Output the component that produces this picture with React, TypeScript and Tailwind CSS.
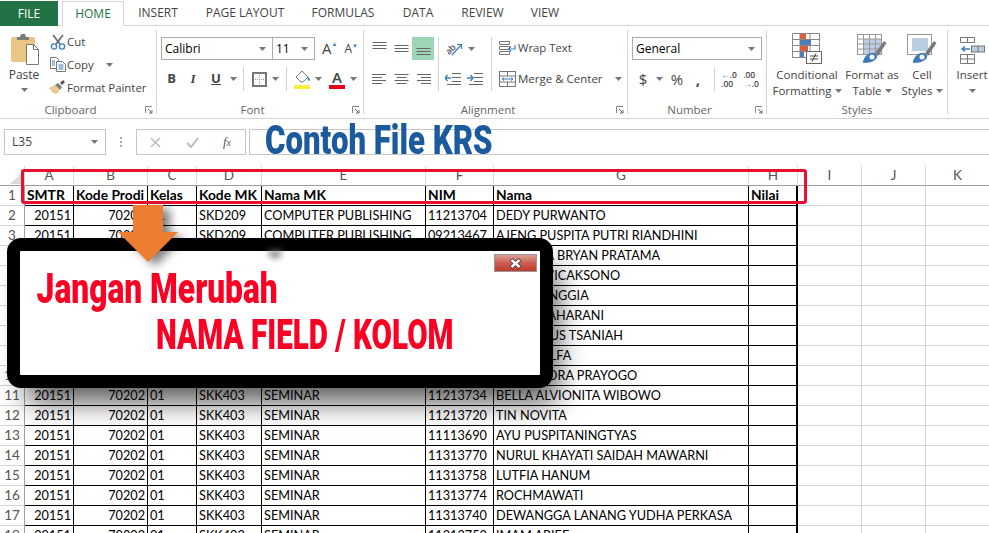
import type { ReactNode } from "react";

// ─── Data ────────────────────────────────────────────────────────────────────

const tabs = [
  { label: "HOME", w: "w-[62px]" },
  { label: "INSERT", w: "w-[68px]" },
  { label: "PAGE LAYOUT", w: "w-[106px]" },
  { label: "FORMULAS", w: "w-[90px]" },
  { label: "DATA", w: "w-[60px]" },
  { label: "REVIEW", w: "w-[69px]" },
  { label: "VIEW", w: "w-[56px]" },
];

const columns = ["A", "B", "C", "D", "E", "F", "G", "H", "I", "J", "K"];
const gridCols =
  "grid grid-cols-[25px_49px_74px_49px_65px_164px_68px_255px_49px_64px_64px_64px]";

const krs = "SKK403";
const rows = [
  ["SKD209", "COMPUTER PUBLISHING", "11213704", "DEDY PURWANTO"],
  ["SKD209", "COMPUTER PUBLISHING", "09213467", "AJENG PUSPITA PUTRI RIANDHINI"],
  [krs, "SEMINAR", "11213700", "ANDHIKA BRYAN PRATAMA"],
  [krs, "SEMINAR", "11213701", "BAGUS WICAKSONO"],
  [krs, "SEMINAR", "11213702", "RATNA ANGGIA"],
  [krs, "SEMINAR", "11213703", "RATIH MAHARANI"],
  [krs, "SEMINAR", "11213705", "IIS FIRDAUS TSANIAH"],
  [krs, "SEMINAR", "11213706", "NURUL ALFA"],
  [krs, "SEMINAR", "11213707", "ADI CANDRA PRAYOGO"],
  [krs, "SEMINAR", "11213734", "BELLA ALVIONITA WIBOWO"],
  [krs, "SEMINAR", "11213720", "TIN NOVITA"],
  [krs, "SEMINAR", "11113690", "AYU PUSPITANINGTYAS"],
  [krs, "SEMINAR", "11313770", "NURUL KHAYATI SAIDAH MAWARNI"],
  [krs, "SEMINAR", "11313758", "LUTFIA HANUM"],
  [krs, "SEMINAR", "11313774", "ROCHMAWATI"],
  [krs, "SEMINAR", "11313740", "DEWANGGA LANANG YUDHA PERKASA"],
  [krs, "SEMINAR", "11313752", "IMAM ARIEF"],
];

// ─── Small icons ─────────────────────────────────────────────────────────────

function Caret() {
  return (
    <svg width="7" height="4" viewBox="0 0 7 4" className="shrink-0">
      <path d="M0 0h7L3.5 4z" fill="#777" />
    </svg>
  );
}

function Launcher() {
  return (
    <svg width="8" height="8" viewBox="0 0 8 8">
      <path d="M0.5 7V0.5H7" fill="none" stroke="#888" />
      <path d="M3 3l4 4M7 4v3H4" fill="none" stroke="#666" />
    </svg>
  );
}

function PasteIcon() {
  return (
    <svg width="30" height="34" viewBox="0 0 30 34">
      <rect x="0" y="5" width="24" height="25" rx="2" fill="#e9c684" />
      <path d="M6 5h3l1-3h4l1 3h3v3H6z" fill="#7a7a7a" />
      <path d="M15.5 12.5h7l5 5v15h-12z" fill="#fff" stroke="#777" />
      <path d="M22.5 12.5v5h5" fill="none" stroke="#777" />
    </svg>
  );
}

function CutIcon() {
  return (
    <svg width="16" height="16" viewBox="0 0 16 16">
      <path d="M3 1l7 9M13 1L6 10" stroke="#666" strokeWidth="1.6" fill="none" />
      <circle cx="4" cy="12.5" r="2.6" fill="none" stroke="#3f7fbf" strokeWidth="1.4" />
      <circle cx="12" cy="12.5" r="2.6" fill="none" stroke="#3f7fbf" strokeWidth="1.4" />
    </svg>
  );
}

function CopyIcon() {
  return (
    <svg width="16" height="15" viewBox="0 0 16 15">
      <path d="M0.5 0.5h6l2 2v9h-8z" fill="#fff" stroke="#777" />
      <path d="M6.5 4.5h6l3 3v7h-9z" fill="#fff" stroke="#777" />
      <path d="M2 4h3M2 6h3M2 8h3M8.5 8h5M8.5 10h5M8.5 12h5" stroke="#3f7fbf" />
    </svg>
  );
}

function PainterIcon() {
  return (
    <svg width="17" height="15" viewBox="0 0 17 15">
      <path d="M0 8l6-3 5 6-4 3c-2 0-5-3-7-6z" fill="#eec98c" />
      <path d="M6 5l3-2 4 4-2 3z" fill="#7d7d7d" />
      <path d="M11 3l3-3 2 2-3 3z" fill="#555" />
    </svg>
  );
}

function Lines({ ys, widths, anchor }: { ys: number[]; widths: number[]; anchor: "l" | "c" | "r" }) {
  return (
    <svg width="15" height="15" viewBox="0 0 15 15">
      {ys.map((y, i) => {
        const w = widths[i % widths.length];
        const x = anchor === "l" ? 0 : anchor === "c" ? (15 - w) / 2 : 15 - w;
        return <path key={y} d={`M${x} ${y + 0.5}h${w}`} stroke="#666" />;
      })}
    </svg>
  );
}

function BorderIcon() {
  return (
    <svg width="15" height="15" viewBox="0 0 15 15">
      <rect x="1" y="1" width="13" height="13" fill="#fff" stroke="#777" strokeWidth="2" />
      <path d="M7.5 3v9M3 7.5h9" stroke="#999" strokeDasharray="1 1" />
    </svg>
  );
}

function FillIcon() {
  return (
    <svg width="17" height="20" viewBox="0 0 17 20">
      <path d="M2 8l6-6 6 6-5 5H7z" fill="#fff" stroke="#777" />
      <path d="M13 7c2 1 3 3 3 4s-2 1-2 0z" fill="#3f7fbf" />
      <rect x="0" y="16" width="16" height="4" fill="#ffeb3b" />
    </svg>
  );
}

function WrapIcon() {
  return (
    <svg width="17" height="15" viewBox="0 0 17 15">
      <path d="M0.5 0.5h10v3h-10zM0.5 5.5h10v3h-10zM0.5 10.5h10v3h-10z" fill="#fff" stroke="#777" />
      <path d="M16 4v4h-6" fill="none" stroke="#3f7fbf" strokeWidth="1.2" />
      <path d="M12 5.5L9.5 8l2.5 2.5" fill="none" stroke="#3f7fbf" strokeWidth="1.2" />
    </svg>
  );
}

function MergeIcon() {
  return (
    <svg width="17" height="16" viewBox="0 0 17 16">
      <rect x="0.5" y="0.5" width="16" height="15" fill="#fff" stroke="#777" />
      <path d="M0.5 5h16M0.5 11h16M8.5 0.5V5M8.5 11v4.5" stroke="#777" />
      <path d="M3 8h11M5 6.5L3 8l2 1.500M12 6.500L14 8l-2 1.500" fill="none" stroke="#3f7fbf" />
    </svg>
  );
}

function OrientIcon() {
  return (
    <svg width="19" height="17" viewBox="0 0 19 17">
      <text x="0" y="12" fontSize="9" fill="#555" fontWeight="600" transform="rotate(-45 6 9)">
        ab
      </text>
      <path d="M7 15L16 5M12 4.500h4.500v4.500" stroke="#3f7fbf" fill="none" strokeWidth="1.200" />
    </svg>
  );
}

function IndentIcon({ flip }: { flip?: boolean }) {
  return (
    <svg width="16" height="12" viewBox="0 0 16 12">
      <path d="M7 0.500h9M7 4.500h9M7 8.500h9M2 11.500h14" stroke="#666" />
      <path
        d={flip ? "M0 5h6M3.500 2L6 5 3.500 8" : "M6 5H0M2.500 2L0 5l2.500 3"}
        stroke="#3f7fbf"
        strokeWidth="1.4"
        fill="none"
      />
    </svg>
  );
}

function CondIcon() {
  return (
    <svg width="30" height="31" viewBox="0 0 30 31">
      <path d="M0.5 0.500h27v24h-27zM0.500 6.500h27M0.500 12.500h27M0.500 18.500h27M8 0.500v24M18 0.500v24" fill="#fff" stroke="#888" />
      <rect x="8" y="1" width="6" height="5" fill="#dd5e3c" />
      <rect x="8" y="7" width="11" height="5" fill="#4a7fb8" />
      <rect x="8" y="13" width="8" height="5" fill="#dd5e3c" />
      <rect x="8" y="19" width="4" height="5" fill="#4a7fb8" />
      <rect x="14.500" y="18.500" width="15" height="12" fill="#fff" stroke="#666" />
      <path d="M18 23h8M18 26h8M24 20.500l-4 8" stroke="#444" fill="none" />
    </svg>
  );
}

function TableIcon({ plain }: { plain?: boolean }) {
  return (
    <svg width="30" height="31" viewBox="0 0 30 31">
      <rect x="0.500" y="1.500" width="24" height="20" fill="#fff" stroke="#999" />
      {plain ? (
        <rect x="5" y="5" width="16" height="13" fill="#b9cde3" />
      ) : (
        <>
          <rect x="6" y="6" width="18" height="15" fill="#bccfe4" />
          <path d="M0.500 6h24M0.500 11h24M0.500 16h24M6.500 1.500v20M12.500 1.500v20M18.500 1.500v20" stroke="#999" />
        </>
      )}
      <path d="M18 20L27 8l2.500 2L21 23z" fill="#7a7a7a" />
      <path d="M6 30c0-6 6-11 11-10 3 1 4 4 2 6-3 3-8 4-13 4z" fill="#3d79b8" />
      <circle cx="15" cy="24" r="2.500" fill="#fff" />
    </svg>
  );
}

function InsertIcon() {
  return (
    <svg width="25" height="27" viewBox="0 0 25 27">
      <path d="M0.500 0.500h14v5h-14zM7.500 0.500v5M0.500 17.500h14v9h-14zM7.500 17.500v9M0.500 22h14" fill="#fff" stroke="#777" />
      <rect x="11.500" y="9" width="13" height="6" fill="#b9cde3" stroke="#777" />
      <path d="M18 9v6" stroke="#777" />
      <path d="M10 12H2M5 9.500L2 12l3 2.500" fill="none" stroke="#3f7fbf" strokeWidth="1.500" />
    </svg>
  );
}

function CloseGlyph() {
  return (
    <svg width="15" height="11" viewBox="0 0 15 11">
      <path d="M3 1.500L12 9.500M12 1.500L3 9.500" stroke="#3a3a3a" strokeWidth="4" fill="none" />
      <path d="M3.500 2L11.500 9M11.500 2L3.500 9" stroke="#fff" strokeWidth="2.400" fill="none" />
    </svg>
  );
}

// ─── Ribbon pieces ───────────────────────────────────────────────────────────

function Sep() {
  return <div className="my-1 w-px shrink-0 bg-[#d4d4d4]" />;
}

function Group({
  label,
  launcher,
  className,
  children,
}: {
  label: string;
  launcher?: boolean;
  className: string;
  children: ReactNode;
}) {
  return (
    <div className={`flex shrink-0 flex-col ${className}`}>
      <div className="h-[75px]">{children}</div>
      <div className="flex h-[17px] items-center">
        <span className="flex-1 text-center text-[11.5px] text-[#666]">{label}</span>
        {launcher && (
          <span className="flex w-[15px] justify-center">
            <Launcher />
          </span>
        )}
      </div>
    </div>
  );
}

function Slot({ w, children }: { w: string; children?: ReactNode }) {
  return <div className={`flex h-full shrink-0 items-center justify-center ${w}`}>{children}</div>;
}

function Big({ w, icon, lines }: { w: string; icon: ReactNode; lines: string[] }) {
  return (
    <div className={`flex shrink-0 flex-col items-center ${w}`}>
      <div className="flex h-[38px] items-end">{icon}</div>
      <div className="mt-[3px] text-center text-[11.5px] leading-[16px] whitespace-nowrap">
        {lines[0]}
      </div>
      <div className="flex items-center gap-[3px] text-[11.5px] leading-[16px] whitespace-nowrap">
        {lines[1]}
        <Caret />
      </div>
    </div>
  );
}

function Clip({ icon, label, caret }: { icon: ReactNode; label: string; caret?: boolean }) {
  return (
    <div className="flex h-[23px] items-center">
      <span className="flex w-[19px] justify-center">{icon}</span>
      <span className="text-[11.4px] whitespace-nowrap">{label}</span>
      {caret && (
        <span className="ml-[12px]">
          <Caret />
        </span>
      )}
    </div>
  );
}

function Ribbon() {
  return (
    <div className="flex h-[93px] border-b border-[#d4d4d4] text-[#444]">
      <Group label="Clipboard" launcher className="w-[156px]">
        <div className="flex">
          <div className="flex w-[48px] flex-col items-center pt-[6px]">
            <span className="ml-[4px] flex">
              <PasteIcon />
            </span>
            <span className="mt-[1px] text-[12px] leading-[16px]">Paste</span>
            <span className="mt-[5px] flex">
              <Caret />
            </span>
          </div>
          <div className="pt-[4px]">
            <Clip icon={<CutIcon />} label="Cut" />
            <Clip icon={<CopyIcon />} label="Copy" caret />
            <Clip icon={<PainterIcon />} label="Format Painter" />
          </div>
        </div>
      </Group>
      <Sep />
      <Group label="Font" launcher className="w-[206px]">
        <div className="pl-[4px] pt-[11px]">
          <div className="flex h-[23px] items-center">
            <div className="flex h-full w-[112px] items-center justify-between border border-[#ababab] pl-[3px] pr-[6px] text-[12px] text-black">
              Calibri
              <Caret />
            </div>
            <div className="-ml-px flex h-full w-[43px] items-center justify-between border border-[#ababab] pl-[3px] pr-[6px] text-[12px] text-black">
              11
              <Caret />
            </div>
            <span className="ml-[7px] flex items-start text-[15px] leading-none">
              A<span className="text-[6px] text-[#3f7fbf]">▲</span>
            </span>
            <span className="ml-[7px] flex items-start text-[12px] leading-none">
              A<span className="text-[6px] text-[#3f7fbf]">▼</span>
            </span>
          </div>
          <div className="mt-[7px] flex h-[24px] items-center text-[13px]">
            <Slot w="w-[21px]">
              <span className="font-bold">B</span>
            </Slot>
            <Slot w="w-[22px]">
              <span className="font-['Liberation_Serif',serif] italic font-bold">I</span>
            </Slot>
            <Slot w="w-[24px]">
              <span className="underline font-bold">U</span>
            </Slot>
            <Slot w="w-[10px]">
              <Caret />
            </Slot>
            <Slot w="w-[10px]">
              <div className="h-full w-px bg-[#d4d4d4]" />
            </Slot>
            <Slot w="w-[22px]">
              <BorderIcon />
            </Slot>
            <Slot w="w-[10px]">
              <Caret />
            </Slot>
            <Slot w="w-[12px]">
              <div className="h-full w-px bg-[#d4d4d4]" />
            </Slot>
            <Slot w="w-[20px]">
              <FillIcon />
            </Slot>
            <Slot w="w-[12px]">
              <Caret />
            </Slot>
            <Slot w="w-[26px]">
              <span className="flex flex-col items-center text-[15px] font-semibold leading-[16px]">
                A<span className="h-[4px] w-[16px] bg-[#e8001c]" />
              </span>
            </Slot>
            <Slot w="w-[6px]">
              <Caret />
            </Slot>
          </div>
        </div>
      </Group>
      <Sep />
      <Group label="Alignment" launcher className="w-[263px]">
        <div className="flex pt-[11px]">
          <div className="w-[74px] pl-[4px]">
            <div className="flex h-[23px]">
              <Slot w="w-[22px]">
                <Lines ys={[1, 4, 7]} widths={[14]} anchor="c" />
              </Slot>
              <Slot w="w-[22px]">
                <Lines ys={[4, 7, 10]} widths={[14]} anchor="c" />
              </Slot>
              <Slot w="w-[22px] bg-[#9fd5b7]">
                <Lines ys={[7, 10, 13]} widths={[14]} anchor="c" />
              </Slot>
            </div>
            <div className="mt-[7px] flex h-[24px]">
              <Slot w="w-[22px]">
                <Lines ys={[2, 5, 8, 11]} widths={[14, 10]} anchor="l" />
              </Slot>
              <Slot w="w-[22px]">
                <Lines ys={[2, 5, 8, 11]} widths={[14, 10]} anchor="c" />
              </Slot>
              <Slot w="w-[22px]">
                <Lines ys={[2, 5, 8, 11]} widths={[14, 10]} anchor="r" />
              </Slot>
            </div>
          </div>
          <div className="h-[54px] w-px bg-[#d4d4d4]" />
          <div className="w-[52px]">
            <div className="flex h-[23px] items-center pl-[6px]">
              <OrientIcon />
              <span className="ml-[4px]">
                <Caret />
              </span>
            </div>
            <div className="mt-[7px] flex h-[24px] items-center gap-[6px] pl-[6px]">
              <IndentIcon />
              <IndentIcon flip />
            </div>
          </div>
          <div className="h-[54px] w-px bg-[#d4d4d4]" />
          <div className="pl-[7px]">
            <div className="flex h-[23px] items-center gap-[2px] text-[11.3px] whitespace-nowrap">
              <WrapIcon />
              Wrap Text
            </div>
            <div className="mt-[7px] flex h-[24px] items-center gap-[2px] text-[11.5px] whitespace-nowrap">
              <MergeIcon />
              Merge &amp; Center
              <span className="ml-[10px]">
                <Caret />
              </span>
            </div>
          </div>
        </div>
      </Group>
      <Sep />
      <Group label="Number" launcher className="w-[138px]">
        <div className="pl-[4px] pt-[11px]">
          <div className="flex h-[23px] w-[130px] items-center justify-between border border-[#ababab] pl-[3px] pr-[6px] text-[12px] text-black">
            General
            <Caret />
          </div>
          <div className="mt-[7px] flex h-[24px] items-center">
            <Slot w="w-[22px]">
              <span className="text-[15px]">$</span>
            </Slot>
            <Slot w="w-[10px]">
              <Caret />
            </Slot>
            <Slot w="w-[26px]">
              <span className="text-[15px]">%</span>
            </Slot>
            <Slot w="w-[16px]">
              <span className="text-[15px] font-bold leading-none">,</span>
            </Slot>
            <Slot w="w-[16px]">
              <div className="h-full w-px bg-[#d4d4d4]" />
            </Slot>
            <Slot w="w-[14px]">
              <span className="text-[8.5px] leading-[9px] font-semibold whitespace-nowrap">
                <span className="text-[#3f7fbf]">←</span>.0
                <br />
                .00
              </span>
            </Slot>
            <Slot w="w-[30px]">
              <span className="text-[8.5px] leading-[9px] font-semibold whitespace-nowrap">
                .00
                <br />
                <span className="text-[#3f7fbf]">→</span>.0
              </span>
            </Slot>
          </div>
        </div>
      </Group>
      <Sep />
      <Group label="Styles" className="w-[180px]">
        <div className="flex pl-[2px]">
          <Big w="w-[76px]" icon={<CondIcon />} lines={["Conditional", "Formatting"]} />
          <Big w="w-[54px]" icon={<TableIcon />} lines={["Format as", "Table"]} />
          <Big w="w-[46px]" icon={<TableIcon plain />} lines={["Cell", "Styles"]} />
        </div>
      </Group>
      <Sep />
      <Group label="" className="w-[48px]">
        <div className="flex flex-col items-center">
          <div className="flex h-[38px] items-end">
            <InsertIcon />
          </div>
          <span className="mt-[3px] text-[11.5px] leading-[16px]">Insert</span>
          <span className="mt-[6px]">
            <Caret />
          </span>
        </div>
      </Group>
    </div>
  );
}

// ─── Formula bar ─────────────────────────────────────────────────────────────

function FormulaBar() {
  return (
    <div className="flex h-[47px] items-start pt-[10px] text-[#444]">
      <div className="ml-[4px] flex h-[26px] w-[102px] items-center justify-between border border-[#c6c6c6] pl-[7px] pr-[7px] text-[12px]">
        L35
        <Caret />
      </div>
      <div className="flex h-[26px] w-[30px] flex-col items-center justify-center gap-[2px]">
        <span className="size-[2px] bg-[#aaa]" />
        <span className="size-[2px] bg-[#aaa]" />
        <span className="size-[2px] bg-[#aaa]" />
      </div>
      <div className="flex h-[26px] w-[110px] items-center border border-[#c6c6c6]">
        <Slot w="w-[37px]">
          <svg width="11" height="11" viewBox="0 0 11 11">
            <path d="M1 1l9 9M10 1l-9 9" stroke="#bbb" strokeWidth="1.500" />
          </svg>
        </Slot>
        <Slot w="w-[36px]">
          <svg width="13" height="11" viewBox="0 0 13 11">
            <path d="M1 6l4 4 7-9" stroke="#bbb" strokeWidth="2" fill="none" />
          </svg>
        </Slot>
        <Slot w="w-[34px]">
          <span className="font-['Liberation_Serif',serif] text-[13px] italic text-[#555]">
            f<span className="text-[10px]">x</span>
          </span>
        </Slot>
      </div>
      <div className="ml-[3px] flex h-[26px] flex-1 items-center border-y border-l border-[#c6c6c6] pl-[15px]">
        <span className="-mt-[2px] origin-left scale-x-[0.78] font-['Roboto',sans-serif] text-[40px] leading-none font-black whitespace-nowrap text-[#1b5a9c]">
          Contoh File KRS
        </span>
      </div>
    </div>
  );
}

// ─── Spreadsheet ─────────────────────────────────────────────────────────────

function Cell({
  className,
  children,
}: {
  className?: string;
  children?: ReactNode;
}) {
  return (
    <div
      className={`h-[20px] overflow-hidden border-r border-b border-black px-[2px] whitespace-nowrap ${className ?? "leading-[19px]"}`}
    >
      {children}
    </div>
  );
}

function Filler() {
  return (
    <>
      <div className="h-[20px] border-r border-b border-[#d4d4d4]" />
      <div className="h-[20px] border-r border-b border-[#d4d4d4]" />
      <div className="h-[20px] border-b border-[#d4d4d4]" />
    </>
  );
}

function RowHead({ n }: { n: number }) {
  return (
    <div className="h-[20px] border-r border-b border-r-[#9e9e9e] border-b-[#d4d4d4] text-center text-[13.5px] leading-[19px] text-[#555]">
      {n}
    </div>
  );
}

function Sheet() {
  return (
    <div className="font-['Lato',sans-serif] text-[12.7px] text-black">
      <div className={gridCols}>
        <div className="flex h-[20px] items-end justify-end border-r border-b border-r-[#d4d4d4] border-b-[#9e9e9e] pr-[2px] pb-[1px]">
          <svg width="12" height="11" viewBox="0 0 12 11">
            <path d="M0 11L12 0v11z" fill="#dcdcdc" />
          </svg>
        </div>
        {columns.map((c) => (
          <div
            key={c}
            className="h-[20px] border-r border-b border-r-[#dcdcdc] border-b-[#9e9e9e] text-center text-[13.5px] leading-[19px] text-[#555]"
          >
            {c}
          </div>
        ))}
      </div>
      <div className={gridCols}>
        <RowHead n={1} />
        {["SMTR", "Kode Prodi", "Kelas", "Kode MK", "Nama MK", "NIM", "Nama", "Nilai"].map((h, i) => (
          <Cell
            key={h}
            className={`text-[13.8px] leading-[17px] font-bold ${i === 7 ? "border-r-2" : ""}`}
          >
            {h}
          </Cell>
        ))}
        <Filler />
        {rows.map((r, i) => (
          <Row key={i} n={i + 2} r={r} />
        ))}
      </div>
    </div>
  );
}

function Row({ n, r }: { n: number; r: string[] }) {
  return (
    <>
      <RowHead n={n} />
      <Cell className="text-right leading-[19px]">20151</Cell>
      <Cell className="text-right leading-[19px]">70202</Cell>
      <Cell>01</Cell>
      <Cell>{r[0]}</Cell>
      <Cell>{r[1]}</Cell>
      <Cell>{r[2]}</Cell>
      <Cell>{r[3]}</Cell>
      <Cell className="border-r-2" />
      <Filler />
    </>
  );
}

// ─── Warning popup ───────────────────────────────────────────────────────────

function Popup() {
  return (
    <div className="absolute top-[238px] left-[7px] h-[150px] w-[546px] rounded-[14px] border-[13px] border-black bg-white shadow-[12px_22px_28px_-8px_rgba(0,0,0,0.65)]">
      <div className="flex justify-end pt-[3px] pr-[3px]">
        <div className="flex h-[18px] w-[43px] items-center justify-center border border-[#999] bg-gradient-to-b from-[#dca198] via-[#cc5c50] to-[#bc3c2e]">
          <CloseGlyph />
        </div>
      </div>
      <div className="-mt-[8px] origin-left scale-x-[0.755] pl-[22px] font-['Roboto',sans-serif] text-[42px] leading-[50px] font-black whitespace-nowrap text-[#fb0022]">
        Jangan Merubah
      </div>
      <div className="origin-left scale-x-[0.705] pl-[193px] font-['Roboto',sans-serif] text-[42px] leading-[42px] font-black whitespace-nowrap text-[#fb0022]">
        NAMA FIELD / KOLOM
      </div>
      <div className="absolute top-0 left-[248px] h-[7px] w-[14px] rounded-b-full bg-[#777] blur-[3px]" />
    </div>
  );
}

function DownArrow() {
  return (
    <svg
      width="62"
      height="60"
      viewBox="0 0 62 60"
      className="absolute top-[204px] left-[118px] drop-shadow-[7px_4px_5px_rgba(0,0,0,0.5)]"
    >
      <path d="M15 1h30v27h15L30 58 0 28h15z" fill="#ed7d31" />
    </svg>
  );
}

// ─── Page ────────────────────────────────────────────────────────────────────

export default function App() {
  return (
    <div className="relative h-[533px] w-[989px] overflow-hidden bg-white font-['Open_Sans',sans-serif]">
      <div className="flex h-[26px] border-b border-[#d4d4d4] text-[12px] text-[#444]">
        <div className="mt-px flex h-[25px] w-[58px] items-center justify-center bg-[#217346] text-white">
          FILE
        </div>
        <div className="w-[4px]" />
        {tabs.map((t, i) => (
          <div
            key={t.label}
            className={`flex items-center justify-center ${t.w} ${
              i === 0 ? "mt-px h-[25px] border-x border-t border-[#d4d4d4] bg-white text-[#217346]" : ""
            }`}
          >
            {t.label}
          </div>
        ))}
      </div>
      <Ribbon />
      <FormulaBar />
      <Sheet />
      <div className="absolute top-[169px] left-[21px] h-[35px] w-[786px] rounded-[3px] border-[3px] border-[#e8102e]" />
      <Popup />
      <DownArrow />
    </div>
  );
}
